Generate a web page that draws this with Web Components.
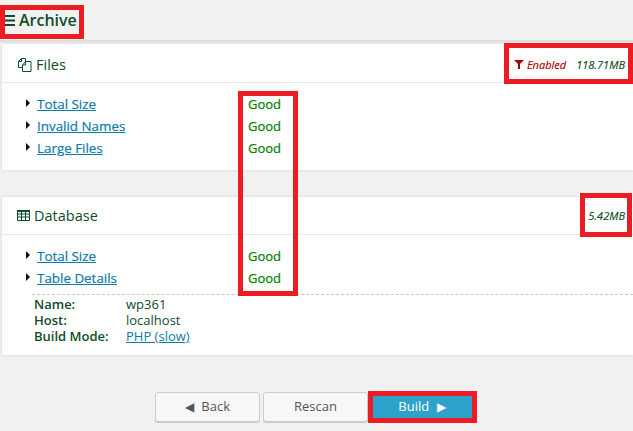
<!DOCTYPE html>
<html>
<head>
<meta charset="utf-8">
<title>Archive</title>
<style>
	html, body { margin: 0; padding: 0; }
	body { background: #f1f1f1; font-family: "Open Sans", sans-serif; font-size: 13px; color: #0f4d2a; width: 633px; height: 431px; overflow: hidden; position: relative; }
</style>
</head>
<body>

<template id="tpl-step-header">
	<style>
		:host { display: flex; align-items: center; gap: 4px; height: 40px; margin: 0 0 2px; padding-left: 5px; border-bottom: 2px solid #dedede; font-size: 16px; font-weight: 600; }
		svg { display: block; }
	</style>
	<svg width="10" height="11" viewBox="0 0 10 11"><path d="M0 0h10v2H0zM0 4.5h10v2H0zM0 9h10v2H0z" fill="#0f4d2a"/></svg>
	<slot></slot>
</template>

<template id="tpl-panel">
	<style>
		:host { display: block; margin: 0 0 27px 2px; background: #fff; box-shadow: 0 0 3px rgba(0,0,0,.12); }
		.head { display: flex; align-items: center; justify-content: space-between; height: 37px; padding: 0 8px 0 15px; border-bottom: 1px solid #e8e8e8; font-size: 14.5px; }
		:host([roomy]) .head { height: 36px; padding-top: 2px; }
		.title { display: flex; align-items: center; gap: 4px; }
		.info { font-size: 11px; font-style: italic; font-weight: 500; -webkit-text-stroke: .15px; }
		.body { padding: 10px 0 11px; }
	</style>
	<div class="head">
		<div class="title"><slot name="icon"></slot><slot name="title"></slot></div>
		<div class="info"><slot name="info"></slot></div>
	</div>
	<div class="body"><slot></slot></div>
</template>

<template id="tpl-check-row">
	<style>
		:host { display: flex; align-items: center; height: 22px; padding-left: 24px; font-size: 13.4px; -webkit-text-stroke: .2px; }
		.arrow { width: 0; height: 0; border-left: 4px solid #111; border-top: 4px solid transparent; border-bottom: 4px solid transparent; margin-right: 7px; margin-top: -2px; }
		a { width: 211px; color: #0a7bab; text-decoration: underline; }
		.status { color: #008000; font-size: 13px; }
	</style>
	<span class="arrow"></span>
	<a href="#"><slot></slot></a>
	<span class="status">Good</span>
</template>

<template id="tpl-db-details">
	<style>
		:host { display: block; margin: 5px 0 0 30px; padding: 1px 0 0 2px; border-top: 1px dashed #c8c8c8; font-size: 13px; line-height: 16px; }
		.row { display: grid; grid-template-columns: 92px 1fr; }
		b { font-weight: 600; }
		a { color: #0a7bab; }
	</style>
	<div class="row"><b>Name:</b><span>wp361</span></div>
	<div class="row"><b>Host:</b><span>localhost</span></div>
	<div class="row"><b>Build Mode:</b><span><a href="#">PHP (slow)</a></span></div>
</template>

<template id="tpl-btn">
	<style>
		:host { display: block; }
		button { display: block; width: 105px; height: 30px; padding: 0 0 2px; border: 1px solid #ccc; border-radius: 3px; background: #f7f7f7; color: #555; font: 13px "Open Sans", sans-serif; word-spacing: 4px; box-shadow: 0 1px 0 #ccc; }
		:host([primary]) button { width: 102px; border-color: #2ea2cc; background: #2ea2cc; color: #fff; box-shadow: none; }
	</style>
	<button type="button"><slot></slot></button>
</template>

<template id="tpl-red-box">
	<style>
		:host { display: block; position: absolute; box-sizing: border-box; border: 5px solid #ed1c24; pointer-events: none; }
	</style>
</template>

<step-header>Archive</step-header>

<check-panel roomy>
	<svg slot="icon" width="15" height="15" viewBox="0 0 15 15" fill="none" stroke="#0f4d2a" stroke-width="1"><path d="M5 10.500H1.500V4.500L4.500 1.500H8.500V4.500M4.500 1.500V4.500H1.500M5.500 14.500V8L8.500 4.500H14V14.500ZM8.500 4.500V8H5.500"/></svg>
	<span slot="title">Files</span>
	<span slot="info"><span style="color:#a80000"><svg width="10" height="9" viewBox="0 0 10 9" style="margin-right:3px"><path d="M0 0h10L6 4v5H4V4z" fill="#a80000"/></svg>Enabled</span><span style="margin-left:10px">118.71MB</span></span>
	<check-row>Total Size</check-row>
	<check-row>Invalid Names</check-row>
	<check-row>Large Files</check-row>
</check-panel>

<check-panel>
	<svg slot="icon" width="13" height="11" viewBox="0 0 13 11" fill="none" stroke="#0f4d2a"><path d="M0 0h13v2H0z" fill="#0f4d2a" stroke="none"/><path d="M.5.500h12v10H.5zM.5 4h12M.5 7h12M4.500.5v10M8.500.5v10"/></svg>
	<span slot="title">Database</span>
	<span slot="info">5.42MB</span>
	<check-row>Total Size</check-row>
	<check-row>Table Details</check-row>
	<db-details></db-details>
</check-panel>

<button-bar></button-bar>

<script>
	class TemplatedElement extends HTMLElement {
		constructor(id) {
			super();
			this.attachShadow({ mode: 'open' });
			this.shadowRoot.appendChild(document.getElementById(id).content.cloneNode(true));
		}
	}

	class StepHeader extends TemplatedElement { constructor() { super('tpl-step-header'); } }
	class CheckPanel extends TemplatedElement { constructor() { super('tpl-panel'); } }
	class CheckRow extends TemplatedElement { constructor() { super('tpl-check-row'); } }
	class DbDetails extends TemplatedElement { constructor() { super('tpl-db-details'); } }
	class WizButton extends TemplatedElement { constructor() { super('tpl-btn'); } }
	class RedBox extends TemplatedElement { constructor() { super('tpl-red-box'); } }

	class ButtonBar extends HTMLElement {
		constructor() {
			super();
			this.attachShadow({ mode: 'open' });
			this.shadowRoot.innerHTML = `
				<style>
					:host { display: flex; justify-content: flex-start; gap: 3px; padding: 10px 0 0 155px; }
					.arrow { font-size: 12px; }
				</style>
				<wiz-button><span class="arrow">&#9664;</span> Back</wiz-button>
				<wiz-button>Rescan</wiz-button>
				<wiz-button primary>Build <span class="arrow">&#9654;</span></wiz-button>`;
		}
	}

	customElements.define('step-header', StepHeader);
	customElements.define('check-panel', CheckPanel);
	customElements.define('check-row', CheckRow);
	customElements.define('db-details', DbDetails);
	customElements.define('wiz-button', WizButton);
	customElements.define('button-bar', ButtonBar);
	customElements.define('red-box', RedBox);

	// the annotation boxes lie over the page
	[[0, 5, 84, 34], [504, 43, 129, 41], [238, 91, 60, 205], [580, 193, 52, 44], [368, 391, 109, 32]].forEach(([x, y, w, h]) => {
		const box = document.createElement('red-box');
		box.style.cssText = `left:${x}px;top:${y}px;width:${w}px;height:${h}px`;
		document.body.appendChild(box);
	});
</script>
</body>
</html>
